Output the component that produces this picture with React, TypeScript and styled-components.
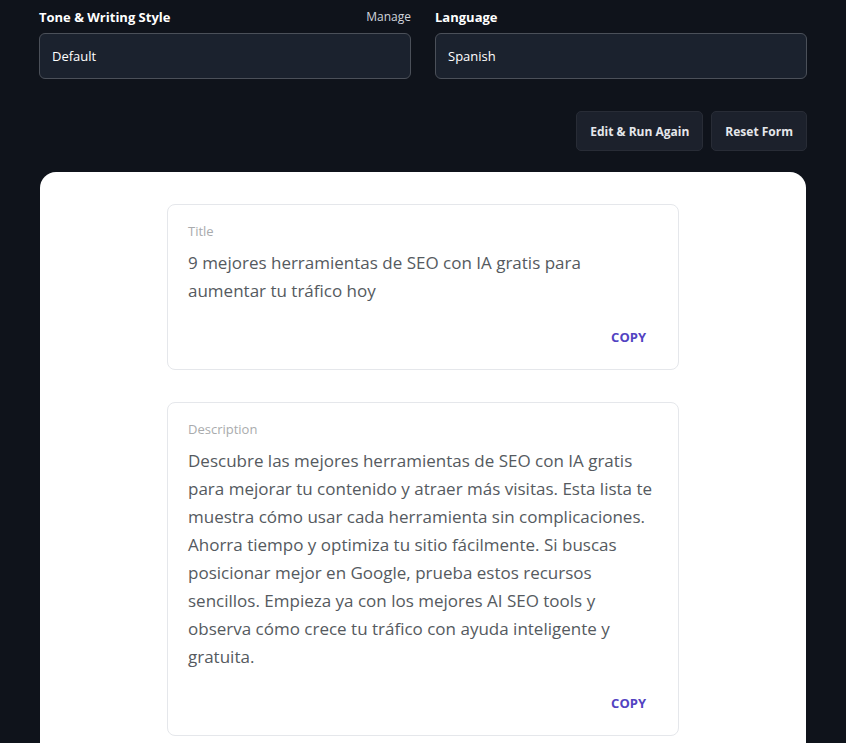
import React from "react";
import styled, { createGlobalStyle } from "styled-components";

const Global = createGlobalStyle`
  *, *::before, *::after { box-sizing: border-box; }
  body {
    margin: 0;
    background: #0f131b;
    font-family: "Open Sans", "Noto Sans", sans-serif;
  }
`;

const Page = styled.main`
  height: 100vh;
  overflow: hidden;
  padding: 7px 39px 0;
  display: flex;
  flex-direction: column;
`;

const Fields = styled.div`
  display: grid;
  grid-template-columns: 1fr 1fr;
  gap: 24px;
`;

const Field = styled.div`
  display: flex;
  flex-direction: column;
  gap: 6px;
`;

const FieldHead = styled.div`
  display: flex;
  justify-content: space-between;
  align-items: center;
  height: 20px;
`;

const Label = styled.label`
  color: #ffffff;
  font-size: 13px;
  font-weight: 700;
  line-height: 20px;
`;

const ManageLink = styled.a`
  color: #d1d5db;
  font-size: 12px;
  line-height: 20px;
  text-decoration: none;
`;

const Select = styled.select`
  appearance: none;
  width: 100%;
  height: 46px;
  padding: 0 12px;
  border: 1px solid #4b5059;
  border-radius: 6px;
  background: #1b222e;
  color: #ffffff;
  font-family: inherit;
  font-size: 13px;
`;

const Actions = styled.div`
  display: flex;
  justify-content: flex-end;
  gap: 8px;
  padding: 32px 0 21px;
`;

const ActionButton = styled.button`
  height: 40px;
  padding: 0 13px;
  border: 1px solid #282c36;
  border-radius: 5px;
  background: #1c212c;
  color: #e5e7eb;
  font-family: inherit;
  font-size: 12px;
  font-weight: 700;
`;

const Results = styled.section`
  display: flex;
  flex-direction: column;
  align-items: center;
  gap: 32px;
  flex: 1 0 auto;
  padding: 32px;
  margin: 0 1px;
  border-radius: 16px;
  background: #ffffff;
`;

const Card = styled.article`
  width: 100%;
  max-width: 512px;
  padding: 16px 20px 20px;
  border: 1px solid #e5e7eb;
  border-radius: 8px;
  display: flex;
  flex-direction: column;
`;

const CardTitle = styled.h2`
  margin: 0 0 8px;
  color: #a9abad;
  font-size: 13px;
  font-weight: 400;
  line-height: 20px;
`;

const CardText = styled.p`
  margin: 0;
  color: #555a60;
  font-size: 17px;
  font-weight: 400;
  line-height: 28px;
`;

const CopyButton = styled.button`
  align-self: flex-end;
  margin: 20px 12px 0 0;
  padding: 0;
  border: 0;
  background: none;
  color: #5243c2;
  font-family: inherit;
  font-size: 13px;
  font-weight: 700;
  line-height: 24px;
`;

const results = [
  {
    title: "Title",
    text: "9 mejores herramientas de SEO con IA gratis para aumentar tu tráfico hoy",
  },
  {
    title: "Description",
    text: "Descubre las mejores herramientas de SEO con IA gratis para mejorar tu contenido y atraer más visitas. Esta lista te muestra cómo usar cada herramienta sin complicaciones. Ahorra tiempo y optimiza tu sitio fácilmente. Si buscas posicionar mejor en Google, prueba estos recursos sencillos. Empieza ya con los mejores AI SEO tools y observa cómo crece tu tráfico con ayuda inteligente y gratuita.",
  },
];

export default function App() {
  return (
    <>
      <Global />
      <Page>
        <Fields>
          <Field>
            <FieldHead>
              <Label htmlFor="tone">Tone &amp; Writing Style</Label>
              <ManageLink href="#manage">Manage</ManageLink>
            </FieldHead>
            <Select id="tone"><option>Default</option></Select>
          </Field>
          <Field>
            <FieldHead>
              <Label htmlFor="language">Language</Label>
            </FieldHead>
            <Select id="language"><option>Spanish</option></Select>
          </Field>
        </Fields>
        <Actions>
          <ActionButton type="button">Edit &amp; Run Again</ActionButton>
          <ActionButton type="button">Reset Form</ActionButton>
        </Actions>
        <Results>
          {results.map((item) => (
            <Card key={item.title}>
              <CardTitle>{item.title}</CardTitle>
              <CardText>{item.text}</CardText>
              <CopyButton type="button">COPY</CopyButton>
            </Card>
          ))}
        </Results>
      </Page>
    </>
  );
}
